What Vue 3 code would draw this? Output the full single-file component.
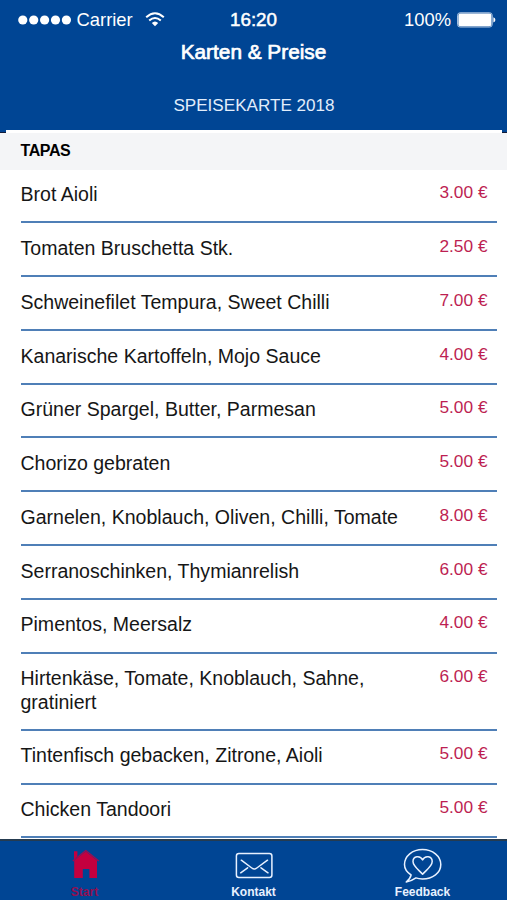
<script setup>
const dishes = [
  { name: 'Brot Aioli', price: '3.00 €' },
  { name: 'Tomaten Bruschetta Stk.', price: '2.50 €' },
  { name: 'Schweinefilet Tempura, Sweet Chilli', price: '7.00 €' },
  { name: 'Kanarische Kartoffeln, Mojo Sauce', price: '4.00 €' },
  { name: 'Grüner Spargel, Butter, Parmesan', price: '5.00 €' },
  { name: 'Chorizo gebraten', price: '5.00 €' },
  { name: 'Garnelen, Knoblauch, Oliven, Chilli, Tomate', price: '8.00 €' },
  { name: 'Serranoschinken, Thymianrelish', price: '6.00 €' },
  { name: 'Pimentos, Meersalz', price: '4.00 €' },
  { name: 'Hirtenkäse, Tomate, Knoblauch, Sahne, gratiniert', price: '6.00 €' },
  { name: 'Tintenfisch gebacken, Zitrone, Aioli', price: '5.00 €' },
  { name: 'Chicken Tandoori', price: '5.00 €' },
]
</script>

<template>
  <div class="screen">
    <header class="header">
      <div class="status">
        <div class="carrier">
          <svg class="signal" width="54" height="10" viewBox="0 0 54 10">
            <circle v-for="i in 5" :key="i" :cx="i * 10.9 - 6.1" cy="5" r="4.6" fill="#fff" />
          </svg>
          <span class="carrier-name">Carrier</span>
          <svg class="wifi" width="20" height="15" viewBox="0 0 20 15" fill="none" stroke="#fff" stroke-width="2">
            <path d="M1.2 5.2Q10 -2.8 18.8 5.2" />
            <path d="M4.2 8.5Q10 3.4 15.8 8.5" />
            <path d="M6.8 11Q10 8 13.2 11L10 14.2Z" fill="#fff" stroke="none" />
          </svg>
        </div>
        <div class="clock">16:20</div>
        <div class="power">
          <span>100%</span>
          <svg class="battery" width="39" height="16" viewBox="0 0 39 16">
            <rect x=".6" y=".8" width="34.6" height="14.2" rx="2.5" fill="none" stroke="#b4cbe6" />
            <rect x="1.4" y="1.6" width="33" height="12.6" rx="1.8" fill="#fff" />
            <path d="M36.4 5.2Q38.4 6 38.4 7.9T36.4 10.6Z" fill="#fff" />
          </svg>
        </div>
      </div>
      <h1 class="title">Karten &amp; Preise</h1>
      <div class="subtitle">SPEISEKARTE 2018</div>
    </header>
    <main class="menu">
      <div class="edge"><div class="edge-line"></div></div>
      <h2 class="section">TAPAS</h2>
      <ul class="list">
        <li v-for="dish in dishes" :key="dish.name" class="row">
          <span class="name">{{ dish.name }}</span>
          <span class="price">{{ dish.price }}</span>
        </li>
      </ul>
    </main>
    <nav class="tabs">
      <a class="tab active">
        <svg width="40" height="36" viewBox="0 0 40 36">
          <path d="M9 3.2H12.4V8.6L9 11.4Z" fill="#c3003f" />
          <path d="M9.2 12.6L20.8 3.6L32 12.6V30H24.4V21H17.8V30H9.2Z" fill="#c3003f" />
          <path d="M7.8 12.9L20.8 2.6L33.8 12.9" fill="none" stroke="#9c0e50" stroke-width="1.3" />
        </svg>
        <span>Start</span>
      </a>
      <a class="tab">
        <svg width="40" height="36" viewBox="0 0 40 36" fill="none" stroke="#e8f1ff" stroke-width="1.5" stroke-linecap="round" stroke-linejoin="round">
          <rect x="2.4" y="5.6" width="35.5" height="24" rx="2.5" />
          <path d="M7.3 12.2L17.8 20Q20.3 22 22.8 20L33.5 12.2M6.7 24.8L13.6 19.8M34 24.8L27 19.8" />
        </svg>
        <span>Kontakt</span>
      </a>
      <a class="tab">
        <svg width="40" height="36" viewBox="0 0 40 36" fill="none" stroke="#e8f1ff" stroke-width="1.5" stroke-linecap="round" stroke-linejoin="round">
          <path d="M8.1 27C3.8 24.3 1.5 20.8 1.5 16.6C1.5 8.2 9.4 1.6 19.5 1.6S37.8 8.2 37.8 16.6S29.7 31 19.5 31C17 31 14.9 30.7 12.9 29.9Q8.2 33.3 3.2 34Q7.2 31 8.1 27Z" />
          <path d="M19.6 26.2C16.5 22.5 10 18.5 10 13.6C10 7.9 17.2 7.2 19.6 11.9C22 7.2 29.2 7.9 29.2 13.6C29.2 18.5 22.7 22.5 19.6 26.2Z" />
        </svg>
        <span>Feedback</span>
      </a>
    </nav>
  </div>
</template>

<style>
body {
  margin: 0;
}
</style>

<style scoped>
.screen {
  width: 507px;
  height: 900px;
  display: flex;
  flex-direction: column;
  overflow: hidden;
  background: #fff;
  font-family: "Liberation Sans", Arial, sans-serif;
}
.header {
  flex: none;
  height: 130px;
  background: #004594;
  color: #fff;
}
.status {
  height: 38px;
  display: grid;
  grid-template-columns: 1fr 60px 1fr;
  align-items: center;
  font-size: 18.4px;
  line-height: 39px;
}
.carrier {
  display: flex;
  align-items: center;
  padding-left: 17.5px;
}
.carrier-name {
  margin-left: 5px;
}
.wifi {
  margin-left: 12px;
}
.clock {
  text-align: center;
  font-size: 18.8px;
  -webkit-text-stroke: 0.5px #fff;
}
.power {
  display: flex;
  align-items: center;
  justify-content: flex-end;
  gap: 6px;
  padding-right: 11px;
}
.title {
  margin: 0;
  height: 27px;
  line-height: 27px;
  text-align: center;
  font-size: 20.8px;
  font-weight: 400;
  -webkit-text-stroke: 0.7px #fff;
}
.subtitle {
  margin-top: 27px;
  padding-left: 1px;
  line-height: 28px;
  text-align: center;
  font-size: 17.1px;
  color: #e2edfb;
}
.menu {
  flex: 1;
  min-height: 0;
  overflow: hidden;
}
.edge {
  height: 3px;
  padding: 0 5px 0 6px;
  background: linear-gradient(#004594 50%, #111c3a 50%);
}
.edge-line {
  height: 3px;
  background: #fff;
}
.section {
  box-sizing: border-box;
  margin: 0;
  height: 36.5px;
  padding-left: 20.5px;
  line-height: 36px;
  font-size: 16px;
  letter-spacing: -0.4px;
  color: #000;
  background: #f4f5f7;
}
.list {
  margin: 0;
  padding: 0 10px 0 20.5px;
  list-style: none;
}
.row {
  box-sizing: border-box;
  display: flex;
  justify-content: space-between;
  align-items: flex-start;
  padding: 13.7px 9.5px 14.7px 0;
  border-bottom: 2px solid #4f7fb7;
}
.name {
  width: 385px;
  font-size: 19.55px;
  line-height: 23.4px;
  color: #161616;
}
.price {
  font-size: 17.3px;
  line-height: 19px;
  color: #bd1f52;
}
.tabs {
  flex: none;
  box-sizing: border-box;
  height: 61px;
  padding-top: 7px;
  display: grid;
  grid-template-columns: repeat(3, 1fr);
  border-top: 2px solid #253b50;
  background: #004594;
}
.tab {
  display: flex;
  flex-direction: column;
  align-items: center;
  font-size: 12px;
  line-height: 16px;
  font-weight: 700;
  color: #e8f1ff;
}
.active {
  color: #930f50;
}
</style>
